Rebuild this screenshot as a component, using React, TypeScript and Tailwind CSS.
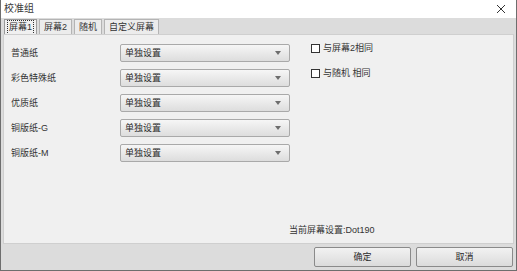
import { useState } from 'react';

const rows = ['普通纸', '彩色特殊纸', '优质纸', '铜版纸-G', '铜版纸-M'];
const tabs = ['屏幕1', '屏幕2', '随机', '自定义屏幕'];

function Select() {
  return (
    <div className="w-[170px] h-[18px] flex items-center justify-between px-[4px] border border-[#a9a9a9] rounded-[2px] bg-gradient-to-b from-[#f6f6f6] to-[#dddddd] text-[#2a2a2a]">
      <span>单独设置</span>
      <span className="w-0 h-0 mr-[4px] border-x-[3px] border-x-transparent border-t-[4px] border-t-[#6d6d6d]" />
    </div>
  );
}

function Check({ label }: { label: string }) {
  const [checked, setChecked] = useState(false);
  return (
    <label className="h-[9px] flex items-center gap-[3px] cursor-pointer" onClick={() => setChecked(!checked)}>
      <span className="w-[9px] h-[9px] border border-[#333] bg-white flex items-center justify-center text-[7px] leading-none">
        {checked ? '✓' : ''}
      </span>
      <span>{label}</span>
    </label>
  );
}

function Button({ children }: { children: string }) {
  return (
    <button className="w-[97px] h-[20px] border border-[#8a8a8a] rounded-[2px] bg-gradient-to-b from-[#f2f2f2] to-[#dbdbdb] text-[#2a2a2a]">
      {children}
    </button>
  );
}

export default function App() {
  const [tab, setTab] = useState(0);

  return (
    <div
      className="w-[517px] h-[271px] flex flex-col bg-[#dcdcdc] border-x border-b border-[#6e6e6e] text-[9px] leading-none text-[#333]"
      style={{ fontFamily: '"Liberation Sans", "Noto Sans CJK SC", sans-serif' }}
    >
      <div className="h-[18px] bg-white flex items-center justify-between pl-[3px] pr-[10px]">
        <span className="text-[10px] text-[#3a3a3a]">校准组</span>
        <svg width="10" height="10" viewBox="0 0 10 10" className="stroke-[#333]">
          <path d="M1 1L9 9M9 1L1 9" strokeWidth="1" />
        </svg>
      </div>

      <div className="h-[16px] flex items-end gap-[2px] pl-[3px]">
        {tabs.map((t, i) => (
          <div
            key={t}
            onClick={() => setTab(i)}
            className={
              i === tab
                ? 'h-[15px] px-[2px] flex items-center border border-b-0 border-[#9a9a9a] bg-[#f0f0f0]'
                : 'h-[15px] px-[4px] flex items-center border border-b-0 border-[#b4b4b4] bg-[#ececec]'
            }
          >
            <span className={i === tab ? 'px-[1px] py-[2px] border border-dotted border-[#333]' : ''}>{t}</span>
          </div>
        ))}
      </div>

      <div className="flex-1 mx-[2px] bg-[#f0f0f0] border border-[#cfcfcf] flex flex-col">
        <div className="flex pt-[9px]">
          <div className="flex flex-col gap-[7px] pl-[7px]">
            {rows.map((r) => (
              <div key={r} className="h-[18px] flex items-center">
                <span className="w-[109px]">{r}</span>
                <Select />
              </div>
            ))}
          </div>
          <div className="flex flex-col gap-[16px] pl-[21px] pt-[0px]">
            <Check label="与屏幕2相同" />
            <Check label="与随机 相同" />
          </div>
        </div>
        <div className="mt-auto mb-[8px] pl-[285px]">当前屏幕设置:Dot190</div>
      </div>

      <div className="h-[26px] flex items-center justify-end gap-[5px] pr-[3px]">
        <Button>确定</Button>
        <Button>取消</Button>
      </div>
    </div>
  );
}
